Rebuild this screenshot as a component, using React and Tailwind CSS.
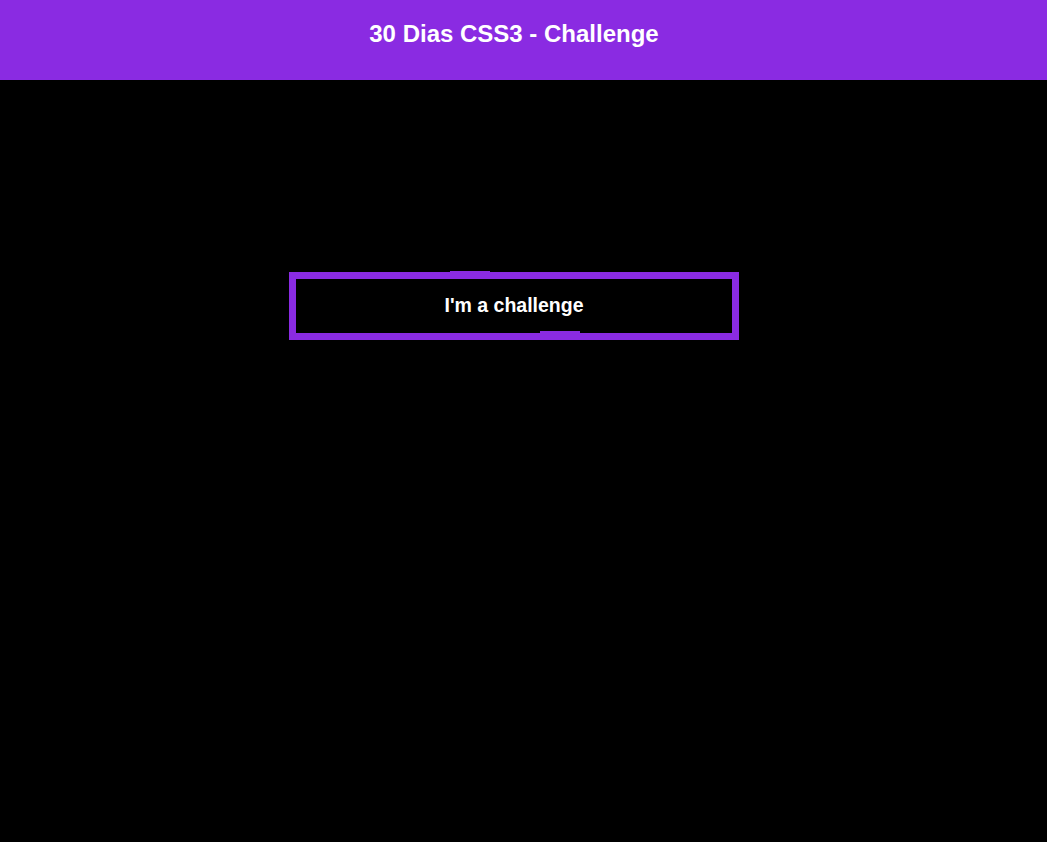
import React from "react";

const App = () => {
  return (
    <div className="min-h-[842px] bg-black font-['Liberation_Sans',Arial,sans-serif] text-white">
      {/* Header */}
      <header className="h-[80px] bg-[#8a2be2]">
        <div className="w-[1028px] pt-[20px] text-center">
          <h1 className="text-[24px] font-bold leading-[28px]">
            30 Dias CSS3 - Challenge
          </h1>
        </div>
      </header>

      {/* Challenge box */}
      <div className="w-[1028px] pt-[192px] flex justify-center">
        <div className="relative w-[450px] h-[68px] border-[7px] border-[#8a2be2] flex items-center justify-center">
          <span className="absolute top-[-8px] left-[154px] w-[40px] h-[1px] bg-[#8a2be2]" />
          <span className="absolute bottom-0 left-[244px] w-[40px] h-[2px] bg-[#8a2be2]" />
          <p className="text-[19.5px] font-bold leading-[24px] pb-[2px]">I'm a challenge</p>
        </div>
      </div>
    </div>
  );
};

export default App;
